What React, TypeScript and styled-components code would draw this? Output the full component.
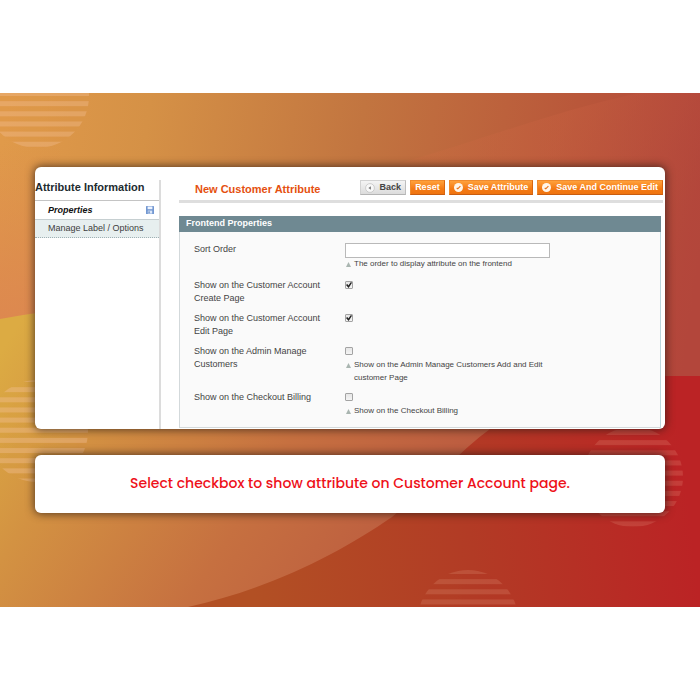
import React from 'react';
import styled, { createGlobalStyle, css } from 'styled-components';

const GlobalStyle = createGlobalStyle`
  *, *::before, *::after { box-sizing: border-box; }
  body {
    margin: 0;
    background: #fff;
    color: #444;
    font: 9px/13px "Liberation Sans", Arial, sans-serif;
  }
`;

const Page = styled.main`
  padding: 93px 0;
`;

const Stage = styled.div`
  position: relative;
  isolation: isolate;
  overflow: hidden;
  display: flex;
  flex-direction: column;
  gap: 26px;
  padding: 74px 5% 94px;
`;

const Backdrop = styled.svg`
  position: absolute;
  inset: 0;
  z-index: -1;
  width: 100%;
  height: 100%;
`;

const Card = styled.section`
  background: #fff;
  border-radius: 6px;
  box-shadow: 0 0 9px 1px rgba(40, 25, 20, 0.7);
`;

const AdminCard = styled(Card)`
  display: flex;
  gap: 18px;
  padding: 13px 2px 0 0;
`;

const Sidebar = styled.nav`
  flex: 0 0 126px;
  border-right: 2px solid #dcdcdc;
`;

const SidebarTitle = styled.h2`
  margin: 0;
  padding-bottom: 6px;
  border-bottom: 1px solid #c4c4c4;
  color: #222b30;
  font-size: 11px;
  line-height: 14px;
`;

const TabLink = styled.a<{ $active?: boolean }>`
  display: flex;
  align-items: center;
  justify-content: space-between;
  height: 18px;
  padding: 0 5px 0 13px;
  border-bottom: 1px dotted #9fb0b4;
  background: #e7efef;
  color: #3d3d3d;
  text-decoration: none;
  ${({ $active }) =>
    $active &&
    css`
      height: 19px;
      border-bottom: 1px solid #c6cfd1;
      background: #fff;
      color: #111;
      font-weight: bold;
      font-style: italic;
    `}
`;

const Content = styled.div`
  flex: 1;
  min-width: 0;
`;

const Header = styled.header`
  display: flex;
  justify-content: space-between;
  align-items: flex-start;
  height: 23px;
  padding-left: 16px;
  border-bottom: 3px solid #dedede;
`;

const Title = styled.h1`
  margin: 0;
  padding-top: 2px;
  color: #e5500f;
  font-size: 11px;
  line-height: 14px;
  white-space: nowrap;
`;

const Actions = styled.div`
  display: flex;
  gap: 4px;
`;

const Button = styled.button<{ $plain?: boolean }>`
  display: flex;
  align-items: center;
  gap: 5px;
  height: 15px;
  padding: 0 4px;
  border: 1px solid;
  border-color: #f08a2c #d9660f #c95d10 #f08a2c;
  background: linear-gradient(#ffa13c, #f47a14 60%, #ef7410);
  color: #fff;
  font: bold 9px/13px "Liberation Sans", Arial, sans-serif;
  white-space: nowrap;
  cursor: pointer;
  ${({ $plain }) =>
    $plain &&
    css`
      border-color: #d2d2d2 #bdbdbd #b4b4b4 #d2d2d2;
      background: linear-gradient(#f4f4f4, #dcdcdc);
      color: #444;
    `}
`;

const Panel = styled.section`
  margin: 13px 2px 0 0;
  padding-bottom: 1px;
`;

const PanelTitle = styled.h3`
  margin: 0;
  padding: 1px 7px 2px;
  background: #6f8992;
  color: #fff;
  font-size: 9px;
  line-height: 13px;
`;

const PanelBody = styled.div`
  display: flex;
  flex-direction: column;
  gap: 7px;
  padding: 11px 14px 8px;
  border: 1px solid #d3d9db;
  border-top: 0;
  border-right-color: #bcd6dc;
  background: #fafafa;
`;

const Row = styled.div`
  display: grid;
  grid-template-columns: 151px minmax(0, 205px);
`;

const RowLabel = styled.label`
  max-width: 132px;
`;

const TextInput = styled.input`
  display: block;
  width: 100%;
  height: 15px;
  padding: 0 3px;
  border: 1px solid #b9b9b9;
  border-radius: 0;
  background: #fff;
  font: inherit;
`;

const Checkbox = styled.input`
  display: grid;
  place-items: center;
  appearance: none;
  width: 8px;
  height: 8px;
  margin: 2px 0 4px;
  border: 1px solid #a3a3a3;
  border-radius: 1px;
  background: linear-gradient(#e6e6e6, #f4f4f4);
  &:checked::before {
    content: "";
    width: 6px;
    height: 6px;
    background: #222;
    clip-path: polygon(0 50%, 22% 34%, 40% 58%, 82% 0, 100% 14%, 44% 100%);
  }
`;

const Help = styled.p`
  display: grid;
  grid-template-columns: 9px 1fr;
  margin: -1px 0 0;
  font-size: 8px;
  line-height: 13px;
`;

const HelpMark = styled.svg`
  width: 5px;
  height: 5px;
  margin: 5px 1px;
`;

const CaptionCard = styled(Card)`
  padding: 16px;
  text-align: center;
`;

const Caption = styled.p`
  margin: 0;
  padding-bottom: 2px;
  color: #ee1119;
  font: 500 14px/24px Poppins, Inter, sans-serif;
`;

type StripedDiscProps = { id: string; cx: number; cy: number; r: number; first: number; opacity: number };

const StripedDisc = ({ id, cx, cy, r, first, opacity }: StripedDiscProps) => (
  <g>
    <clipPath id={id}>
      <circle cx={cx} cy={cy} r={r} />
    </clipPath>
    <g clipPath={`url(#${id})`} fill="#f5c3a0" opacity={opacity}>
      {Array.from({ length: 11 }, (_, i) => (
        <rect key={i} x={cx - r} y={first + i * 10.15} width={r * 2} height="5" />
      ))}
    </g>
  </g>
);

const Scenery = () => (
  <Backdrop viewBox="0 0 700 514" preserveAspectRatio="none" aria-hidden="true">
    <defs>
      <linearGradient id="base" gradientUnits="userSpaceOnUse" x1="0" y1="60" x2="700" y2="160">
        <stop offset="0" stopColor="#e09a4a" />
        <stop offset="0.2" stopColor="#d59146" />
        <stop offset="0.5" stopColor="#c27540" />
        <stop offset="0.8" stopColor="#b9573a" />
        <stop offset="1" stopColor="#b3453b" />
      </linearGradient>
      <linearGradient id="leftFade" x1="0" y1="0" x2="0" y2="1">
        <stop offset="0" stopColor="#dd8650" stopOpacity="0" />
        <stop offset="1" stopColor="#dd8650" />
      </linearGradient>
      <linearGradient id="sweep" gradientUnits="userSpaceOnUse" x1="400" y1="60" x2="680" y2="150">
        <stop offset="0" stopColor="#cb6f42" stopOpacity="0.3" />
        <stop offset="0.5" stopColor="#c65f40" stopOpacity="0.45" />
        <stop offset="1" stopColor="#b3473b" stopOpacity="0.5" />
      </linearGradient>
      <linearGradient id="gold" gradientUnits="userSpaceOnUse" x1="0" y1="260" x2="380" y2="500">
        <stop offset="0" stopColor="#dcab43" />
        <stop offset="0.25" stopColor="#d39242" />
        <stop offset="0.65" stopColor="#c67040" />
        <stop offset="1" stopColor="#bc5c40" />
      </linearGradient>
      <linearGradient id="ember" gradientUnits="userSpaceOnUse" x1="250" y1="470" x2="690" y2="420">
        <stop offset="0" stopColor="#b25024" />
        <stop offset="0.5" stopColor="#b23b25" />
        <stop offset="1" stopColor="#bb2325" />
      </linearGradient>
    </defs>
    <rect width="700" height="514" fill="url(#base)" />
    <rect y="50" width="60" height="200" fill="url(#leftFade)" />
    <path d="M400 70C500 42 570 10 700 -12V300H400Z" fill="url(#sweep)" />
    <path d="M0 226C160 198 360 190 520 290V514H0Z" fill="url(#gold)" />
    <path d="M188 514C270 496 340 460 392 424C430 392 460 358 490 336C535 300 600 283 665 283H700V514Z" fill="url(#ember)" />
    <StripedDisc id="disc-top" cx={37} cy={3} r={52} first={-2} opacity={0.32} />
    <StripedDisc id="disc-left" cx={37} cy={338} r={51} first={284} opacity={0.34} />
    <StripedDisc id="disc-right" cx={633} cy={384} r={50} first={337} opacity={0.16} />
    <StripedDisc id="disc-bottom" cx={468} cy={527} r={50} first={476} opacity={0.16} />
  </Backdrop>
);

const SaveIcon = () => (
  <svg width="8" height="8" viewBox="0 0 8 8" aria-hidden="true">
    <rect width="8" height="8" rx="0.6" fill="#7297d1" />
    <rect x="1.6" y="0.5" width="4.8" height="2.7" fill="#edf4ff" />
    <rect x="1.8" y="4.6" width="4.4" height="3" fill="#dce8fa" />
    <rect x="2.5" y="5.3" width="1.1" height="2" fill="#5078b8" />
  </svg>
);

const BackIcon = () => (
  <svg width="10" height="10" viewBox="0 0 10 10" aria-hidden="true">
    <circle cx="5" cy="5" r="4.4" fill="#f8f8f8" stroke="#c4c4c4" strokeWidth="0.8" />
    <path d="M3.4 5L5.9 3.2V6.8Z" fill="#777" />
  </svg>
);

const CheckIcon = () => (
  <svg width="9" height="9" viewBox="0 0 9 9" aria-hidden="true">
    <circle cx="4.5" cy="4.5" r="4.5" fill="#fff6ea" />
    <path d="M2.7 5L3.8 5.8L6.4 3.2" fill="none" stroke="#e8721a" strokeWidth="1.2" />
  </svg>
);

type Field = { id: string; label: string; kind: 'text' | 'check'; checked?: boolean; help?: string };

const fields: Field[] = [
  { id: 'sort-order', label: 'Sort Order', kind: 'text', help: 'The order to display attribute on the frontend' },
  { id: 'account-create', label: 'Show on the Customer Account Create Page', kind: 'check', checked: true },
  { id: 'account-edit', label: 'Show on the Customer Account Edit Page', kind: 'check', checked: true },
  {
    id: 'admin-manage',
    label: 'Show on the Admin Manage Customers',
    kind: 'check',
    help: 'Show on the Admin Manage Customers Add and Edit customer Page',
  },
  { id: 'checkout-billing', label: 'Show on the Checkout Billing', kind: 'check', help: 'Show on the Checkout Billing' },
];

const FieldRow = ({ id, label, kind, checked, help }: Field) => (
  <Row>
    <RowLabel htmlFor={id}>{label}</RowLabel>
    <div>
      {kind === 'text' ? <TextInput id={id} type="text" /> : <Checkbox id={id} type="checkbox" defaultChecked={checked} />}
      {help && (
        <Help>
          <HelpMark viewBox="0 0 5 5" aria-hidden="true">
            <path d="M2.5 0L5 5H0Z" fill="#a9b5b0" />
          </HelpMark>
          <span>{help}</span>
        </Help>
      )}
    </div>
  </Row>
);

export default function App() {
  return (
    <Page>
      <GlobalStyle />
      <Stage>
        <Scenery />
        <AdminCard>
          <Sidebar>
            <SidebarTitle>Attribute Information</SidebarTitle>
            <TabLink href="#properties" $active>
              Properties
              <SaveIcon />
            </TabLink>
            <TabLink href="#labels">Manage Label / Options</TabLink>
          </Sidebar>
          <Content>
            <Header>
              <Title>New Customer Attribute</Title>
              <Actions>
                <Button type="button" $plain>
                  <BackIcon />
                  Back
                </Button>
                <Button type="button">Reset</Button>
                <Button type="button">
                  <CheckIcon />
                  Save Attribute
                </Button>
                <Button type="button">
                  <CheckIcon />
                  Save And Continue Edit
                </Button>
              </Actions>
            </Header>
            <Panel>
              <PanelTitle>Frontend Properties</PanelTitle>
              <PanelBody>
                {fields.map((field) => (
                  <FieldRow key={field.id} {...field} />
                ))}
              </PanelBody>
            </Panel>
          </Content>
        </AdminCard>
        <CaptionCard>
          <Caption>Select checkbox to show attribute on Customer Account page.</Caption>
        </CaptionCard>
      </Stage>
    </Page>
  );
}
